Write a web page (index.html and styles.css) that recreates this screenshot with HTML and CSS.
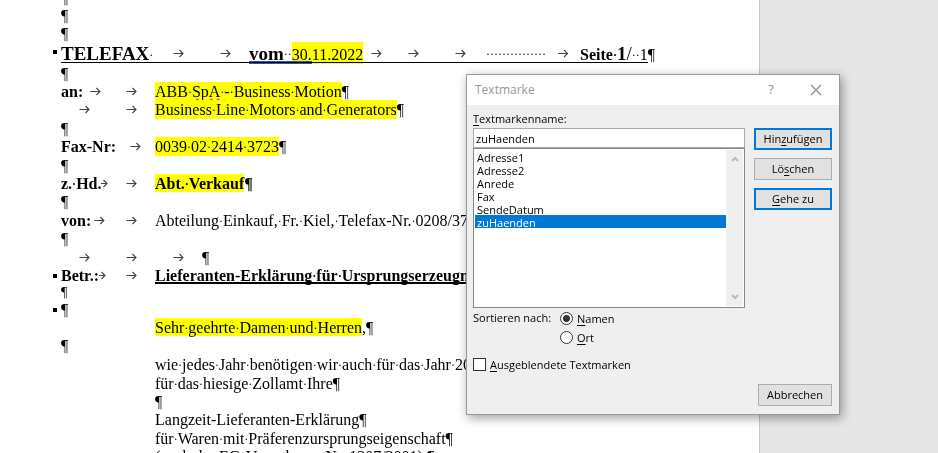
FILE: index.html
```html
<!DOCTYPE html>
<html lang="de">
<head>
<meta charset="utf-8">
<title>Telefax</title>
<link rel="stylesheet" href="styles.css">
</head>
<body>
<svg class="sprite" aria-hidden="true">
  <symbol id="tab" viewBox="0 0 11 9"><path d="M0.5 4.5H10M6.5 1L10 4.5L6.5 8" fill="none" stroke="#444" stroke-width="1.1"/></symbol>
  <symbol id="tab-short" viewBox="4 0 7 9"><path d="M4 4.5H10M6.5 1L10 4.5L6.5 8" fill="none" stroke="#444" stroke-width="1.1"/></symbol>
</svg>
<div class="workspace">
<main class="page">
  <p class="line cut">¶</p>
  <p class="line">¶</p>
  <p class="line">¶</p>
  <p class="line head mark">
    <span class="cell two"><span><b class="big">TELEFAX</b>·</span></span>
    <span class="cell"><svg><use href="#tab"/></svg></span>
    <span class="cell"><svg><use href="#tab"/></svg></span>
    <span class="cell three"><span class="grammar"><b class="big">vom</b><span>··</span><span class="hl">30.</span></span><span class="hl">11.2022</span><svg><use href="#tab"/></svg></span>
    <span class="cell"><svg><use href="#tab"/></svg></span>
    <span class="cell"><svg><use href="#tab"/></svg></span>
    <span class="cell leader"><span>···············</span><svg><use href="#tab"/></svg></span>
    <span><b>Seite·</b><b class="big">1</b><span class="big">/</span>··1¶</span>
  </p>
  <p class="line">¶</p>
  <p class="line"><span class="cell"><b>an:</b><svg><use href="#tab"/></svg></span><span class="cell"><svg><use href="#tab"/></svg></span><span class="hl">ABB·<span class="spell">SpA·</span>-·Business·Motion</span>¶</p>
  <p class="line tall"><span class="cell"><svg><use href="#tab"/></svg></span><span class="cell"><svg><use href="#tab"/></svg></span><span class="hl">Business·Line·Motors·and·Generators</span>¶</p>
  <p class="line">¶</p>
  <p class="line tall"><span class="cell two"><b>Fax-Nr:</b><svg><use href="#tab"/></svg></span><span class="hl">0039·02·2414·3723</span>¶</p>
  <p class="line">¶</p>
  <p class="line"><span class="cell"><b>z.·Hd.</b><svg class="short"><use href="#tab-short"/></svg></span><span class="cell"><svg><use href="#tab"/></svg></span><b class="hl">Abt.·Verkauf</b><b>¶</b></p>
  <p class="line tall">¶</p>
  <p class="line"><span class="cell"><b>von:</b><svg><use href="#tab"/></svg></span><span class="cell"><svg><use href="#tab"/></svg></span><span>Abteilung·Einkauf,·Fr.·Kiel,·Telefax-Nr.·0208/37</span></p>
  <p class="line tall">¶</p>
  <p class="line"><span class="cell"><svg><use href="#tab"/></svg></span><span class="cell"><svg><use href="#tab"/></svg></span><span class="cell"><svg><use href="#tab"/></svg></span>¶</p>
  <p class="line mark"><span class="cell"><b>Betr.:</b><svg class="short"><use href="#tab-short"/></svg></span><span class="cell"><svg><use href="#tab"/></svg></span><b class="subject">Lieferanten-Erklärung·für·Ursprungserzeugnisse</b></p>
  <p class="line small">¶</p>
  <p class="line mark">¶</p>
  <p class="line indent"><span class="hl">Sehr·geehrte·Damen·und·Herren</span>,¶</p>
  <p class="line tall">¶</p>
  <p class="line tall indent"><span>wie·jedes·Jahr·benötigen·wir·auch·für·das·Jahr·20</span></p>
  <p class="line indent"><span>für·das·hiesige·Zollamt·Ihre¶</span></p>
  <p class="line indent">¶</p>
  <p class="line tall indent"><span>Langzeit-Lieferanten-Erklärung¶</span></p>
  <p class="line indent"><span>für·Waren·mit·Präferenzursprungseigenschaft¶</span></p>
  <p class="line indent"><span>(nach·der·EG-Verordnung·Nr.·1207/2001).¶</span></p>
</main>
<aside class="desk"></aside>
</div>

<form class="dialog" role="dialog" aria-labelledby="dlg-title">
  <header class="titlebar">
    <h1 id="dlg-title">Textmarke</h1>
    <button type="button" class="help" aria-label="Hilfe">?</button>
    <button type="button" class="close" aria-label="Schließen"><svg viewBox="0 0 12 12"><path d="M1 1L11 11M11 1L1 11" fill="none" stroke="#888" stroke-width="1.1"/></svg></button>
  </header>
  <div class="content">
    <label class="caption" for="name"><u>T</u>extmarkenname:</label>
    <div class="columns">
      <div class="fields">
        <input id="name" class="name" type="text" value="zuHaenden">
        <div class="listbox">
          <select class="list" size="12" aria-label="Textmarken">
            <option>Adresse1</option>
            <option>Adresse2</option>
            <option>Anrede</option>
            <option>Fax</option>
            <option>SendeDatum</option>
            <option selected>zuHaenden</option>
          </select>
          <div class="scroll">
            <svg viewBox="0 0 8 6"><path d="M1 5L4 2L7 5" fill="none" stroke="#bbb" stroke-width="2"/></svg>
            <svg viewBox="0 0 8 6"><path d="M1 1L4 4L7 1" fill="none" stroke="#bbb" stroke-width="2"/></svg>
          </div>
        </div>
      </div>
      <div class="actions">
        <button type="button" class="btn primary">Hin<u>z</u>ufügen</button>
        <button type="button" class="btn">Lö<u>s</u>chen</button>
        <button type="button" class="btn primary"><u>G</u>ehe zu</button>
      </div>
    </div>
    <fieldset class="sort">
      <legend>Sortieren nach:</legend>
      <div class="choices">
        <label class="choice"><input type="radio" name="sort" checked><span><u>N</u>amen</span></label>
        <label class="choice"><input type="radio" name="sort"><span><u>O</u>rt</span></label>
      </div>
    </fieldset>
    <label class="choice hidden-marks"><input type="checkbox"><span><u>A</u>usgeblendete Textmarken</span></label>
    <div class="footer"><button type="button" class="btn cancel">Abbrechen</button></div>
  </div>
</form>
<script src="script.js"></script>
</body>
</html>
```
FILE: script.js
```js
// Wrap each visible space mark so that it takes the width of a normal space.
const walker = document.createTreeWalker(document.querySelector(".page"), NodeFilter.SHOW_TEXT);
const nodes = [];
while (walker.nextNode()) {
  if (walker.currentNode.data.includes("·")) nodes.push(walker.currentNode);
}
for (const node of nodes) {
  // Bare text in a flex row must stay one item.
  const holder = document.createElement("span");
  for (const part of node.data.split(/(·)/)) {
    if (part === "·") {
      const dot = document.createElement("span");
      dot.className = "space";
      dot.textContent = part;
      holder.append(dot);
    } else {
      holder.append(part);
    }
  }
  node.replaceWith(holder);
}
```
FILE: styles.css
```css
* { box-sizing: border-box; }
body {
  margin: 0;
  height: 100vh;
  overflow: hidden;
  position: relative;
  background: #fff;
  color: #000;
}
.sprite { position: absolute; width: 0; height: 0; }

.workspace { display: grid; grid-template-columns: 1fr 179px; height: 100%; }
.page {
  padding-left: 61px;
  overflow: hidden;
  font: 16px/20px "Liberation Serif", serif;
  white-space: nowrap;
  will-change: transform;
}
.desk { background: #e6e6e6; border-left: 1px solid #c6c6c6; }

.line { position: relative; display: flex; height: 18px; margin: 0; }
.tall { height: 19px; }
.small { height: 16px; line-height: 18px; font-size: 14px; }
.cut { margin-top: -12px; }
.indent { padding-left: 94px; }
.mark::before {
  content: "";
  position: absolute;
  left: -8px;
  top: 8px;
  width: 4px;
  height: 4px;
  background: #000;
}
.space { font-size: 12px; line-height: 0; vertical-align: 1px; }

.cell { display: flex; flex: none; width: 47px; }
.two { width: 94px; }
.three { width: 141px; }
.leader { width: 96px; padding-left: 2px; }
.cell svg { flex: 1; min-width: 0; height: 9px; align-self: center; }
.cell .short { flex: none; width: 7px; }
.hl { background: #ff0; }
.spell { text-decoration: underline wavy #e00 1px; text-underline-offset: 1px; }
.subject { border-bottom: 2px solid #000; }

.head { height: 22px; line-height: 24px; width: 594px; }
.head::after {
  content: "";
  position: absolute;
  left: 0;
  right: 7px;
  top: 20px;
  height: 1px;
  background: #000;
}
.head .hl { height: 22px; line-height: 26px; }
.big { font-size: 19px; }
.grammar { position: relative; display: flex; }
.grammar::after {
  content: "";
  position: absolute;
  left: 0;
  right: 0;
  top: 19px;
  height: 3px;
  background: #2458c0;
}

.dialog {
  position: absolute;
  left: 466px;
  top: 74px;
  width: 374px;
  background: #efefef;
  border: 1px solid #999;
  box-shadow: 2px 3px 10px rgba(0, 0, 0, .38);
  font: 11px/14px "Open Sans", "Noto Sans", sans-serif;
}
.dialog button, .dialog input, .dialog select { font: inherit; color: #000; }
.dialog u { text-underline-offset: 2px; }
.titlebar { display: flex; align-items: center; height: 30px; padding: 0 16px 0 8px; background: #fff; }
.titlebar h1 { flex: 1; margin: 0; font-size: 12px; font-weight: 400; color: #999; }
.titlebar button { border: 0; padding: 0; background: none; }
.titlebar .help { width: 16px; margin-right: 30px; font-size: 12px; color: #888; }
.titlebar .close { width: 14px; height: 12px; }
.close svg { display: block; width: 12px; height: 12px; margin: 0 auto; }

.content { padding: 7px 7px 8px 6px; }
.caption { display: block; height: 16px; }
.columns { display: flex; gap: 9px; }
.fields { flex: 1; }
.name { display: block; width: 100%; height: 20px; padding: 0 2px; border: 1px solid #aaa; background: #fff; outline: 0; }
.listbox { display: flex; height: 160px; padding: 1px; border: 1px solid #828790; background: #fff; }
.dialog .list { flex: 1; height: 156px; padding: 0; border: 0; outline: 0; overflow: hidden; background: #fff; border-radius: 0; }
.list option { height: 13px; min-height: 13px; padding: 0 2px; line-height: 11px; }
.list option:checked { background: linear-gradient(#0078d7, #0078d7); color: #fff; }
.scroll { display: flex; flex-direction: column; justify-content: space-between; align-items: center; width: 17px; padding: 6px 0; background: #efefef; }
.scroll svg { width: 8px; height: 6px; }

.actions { display: flex; flex-direction: column; gap: 8px; width: 78px; }
.btn { height: 22px; padding: 0; border: 1px solid #adadad; background: #e1e1e1; }
.primary { border: 2px solid #0078d7; }

.sort { display: flex; margin: 1px 0 0; padding: 0; border: 0; }
.sort legend { float: left; width: 87px; padding: 2px 0 0; }
.choice { display: flex; align-items: center; gap: 4px; height: 19px; }
.choice input { appearance: none; flex: none; width: 13px; height: 13px; margin: 0; border: 1px solid #333; background: #fff; }
.choice input[type="radio"] { border-radius: 50%; }
.choice input[type="radio"]:checked { background: radial-gradient(circle, #333 0 3px, #fff 4px); }
.hidden-marks { margin-top: 8px; }
.footer { display: flex; justify-content: flex-end; margin-top: 10px; }
.cancel { width: 74px; }
```
